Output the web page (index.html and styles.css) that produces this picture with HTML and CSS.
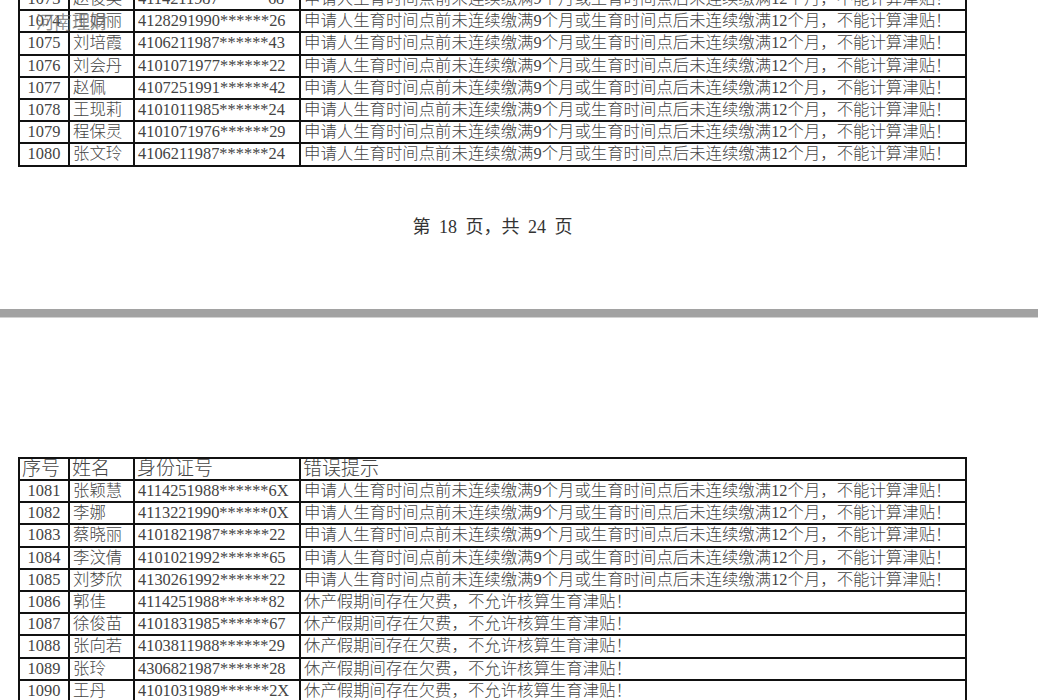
FILE: index.html
```html
<!DOCTYPE html>
<html lang="zh-CN">
<head>
<meta charset="utf-8">
<title>第 18 页</title>
<link rel="stylesheet" href="styles.css">
</head>
<body>
<div class="viewer">
  <section class="page page-top">
    <table class="sheet sheet-top">
      <colgroup><col class="c-no"><col class="c-name"><col class="c-id"><col class="c-msg"></colgroup>
      <tbody>
        <tr><td class="no">1073</td><td>赵俊英</td><td>4114211987******68</td><td>申请人生育时间点前未连续缴满9个月或生育时间点后未连续缴满12个月，不能计算津贴！</td></tr>
        <tr><td class="no">1074</td><td>王娟丽</td><td>4128291990******26</td><td>申请人生育时间点前未连续缴满9个月或生育时间点后未连续缴满12个月，不能计算津贴！</td></tr>
        <tr><td class="no">1075</td><td>刘培霞</td><td>4106211987******43</td><td>申请人生育时间点前未连续缴满9个月或生育时间点后未连续缴满12个月，不能计算津贴！</td></tr>
        <tr><td class="no">1076</td><td>刘会丹</td><td>4101071977******22</td><td>申请人生育时间点前未连续缴满9个月或生育时间点后未连续缴满12个月，不能计算津贴！</td></tr>
        <tr><td class="no">1077</td><td>赵佩</td><td>4107251991******42</td><td>申请人生育时间点前未连续缴满9个月或生育时间点后未连续缴满12个月，不能计算津贴！</td></tr>
        <tr><td class="no">1078</td><td>王现莉</td><td>4101011985******24</td><td>申请人生育时间点前未连续缴满9个月或生育时间点后未连续缴满12个月，不能计算津贴！</td></tr>
        <tr><td class="no">1079</td><td>程保灵</td><td>4101071976******29</td><td>申请人生育时间点前未连续缴满9个月或生育时间点后未连续缴满12个月，不能计算津贴！</td></tr>
        <tr><td class="no">1080</td><td>张文玲</td><td>4106211987******24</td><td>申请人生育时间点前未连续缴满9个月或生育时间点后未连续缴满12个月，不能计算津贴！</td></tr>
      </tbody>
    </table>
    <p class="pager">第 18 页，共 24 页</p>
    <span class="watermark">河南理财</span>
  </section>
  <div class="page-gap"></div>
  <section class="page page-bottom">
    <table class="sheet sheet-bottom">
      <colgroup><col class="c-no"><col class="c-name"><col class="c-id"><col class="c-msg"></colgroup>
      <thead>
        <tr><th>序号</th><th>姓名</th><th>身份证号</th><th>错误提示</th></tr>
      </thead>
      <tbody>
        <tr><td class="no">1081</td><td>张颖慧</td><td>4114251988******6X</td><td>申请人生育时间点前未连续缴满9个月或生育时间点后未连续缴满12个月，不能计算津贴！</td></tr>
        <tr><td class="no">1082</td><td>李娜</td><td>4113221990******0X</td><td>申请人生育时间点前未连续缴满9个月或生育时间点后未连续缴满12个月，不能计算津贴！</td></tr>
        <tr><td class="no">1083</td><td>蔡晓丽</td><td>4101821987******22</td><td>申请人生育时间点前未连续缴满9个月或生育时间点后未连续缴满12个月，不能计算津贴！</td></tr>
        <tr><td class="no">1084</td><td>李汶倩</td><td>4101021992******65</td><td>申请人生育时间点前未连续缴满9个月或生育时间点后未连续缴满12个月，不能计算津贴！</td></tr>
        <tr><td class="no">1085</td><td>刘梦欣</td><td>4130261992******22</td><td>申请人生育时间点前未连续缴满9个月或生育时间点后未连续缴满12个月，不能计算津贴！</td></tr>
        <tr><td class="no">1086</td><td>郭佳</td><td>4114251988******82</td><td>休产假期间存在欠费，不允许核算生育津贴！</td></tr>
        <tr><td class="no">1087</td><td>徐俊苗</td><td>4101831985******67</td><td>休产假期间存在欠费，不允许核算生育津贴！</td></tr>
        <tr><td class="no">1088</td><td>张向若</td><td>4103811988******29</td><td>休产假期间存在欠费，不允许核算生育津贴！</td></tr>
        <tr><td class="no">1089</td><td>张玲</td><td>4306821987******28</td><td>休产假期间存在欠费，不允许核算生育津贴！</td></tr>
        <tr><td class="no">1090</td><td>王丹</td><td>4101031989******2X</td><td>休产假期间存在欠费，不允许核算生育津贴！</td></tr>
      </tbody>
    </table>
  </section>
</div>
</body>
</html>
```
FILE: styles.css
```css
html, body {
  margin: 0;
  padding: 0;
  background: #ffffff;
}

body {
  font-family: "Liberation Serif", "Noto Sans CJK SC", serif;
  color: #444;
  overflow: hidden;
}

.viewer {
  width: 1038px;
}

.page {
  position: relative;
  display: flow-root;
  background: #ffffff;
}

.page-top {
  height: 309px;
}

.page-gap {
  height: 8px;
  background: #a2a2a2;
  border-bottom: 1px solid #d2d2d2;
}

.page-bottom {
  padding-top: 139px;
  height: 400px;
}

.sheet {
  table-layout: fixed;
  border-collapse: separate;
  border-spacing: 0;
  width: 949px;
  margin-left: 18px;
  border-left: 2px solid #111;
  border-top: 2px solid #111;
}

.sheet-top {
  margin-top: -13px;
}

.c-no { width: 50px; }
.c-name { width: 65px; }
.c-id { width: 166px; }
.c-msg { width: 666px; }

.sheet td,
.sheet th {
  box-sizing: border-box;
  height: 22.2px;
  padding: 0 0 0 3px;
  border-right: 2px solid #111;
  border-bottom: 2px solid #111;
  font-size: 16.4px;
  line-height: 20px;
  font-weight: 300;
  text-align: left;
  white-space: nowrap;
  overflow: hidden;
  vertical-align: middle;
}

.sheet th {
  height: 22px;
  font-size: 19px;
  padding-left: 2px;
  padding-top: 0;
}

.sheet td.no {
  text-align: center;
  padding-left: 0;
}

.pager {
  margin: 50px 0 0;
  width: 985px;
  text-align: center;
  font-size: 18px;
  line-height: 20px;
  word-spacing: 4px;
  color: #333;
}

.watermark {
  position: absolute;
  left: 36px;
  top: 11px;
  font-family: "Noto Sans CJK SC", sans-serif;
  font-size: 18px;
  line-height: 20px;
  color: rgba(110, 110, 110, 0.75);
  pointer-events: none;
}
```
